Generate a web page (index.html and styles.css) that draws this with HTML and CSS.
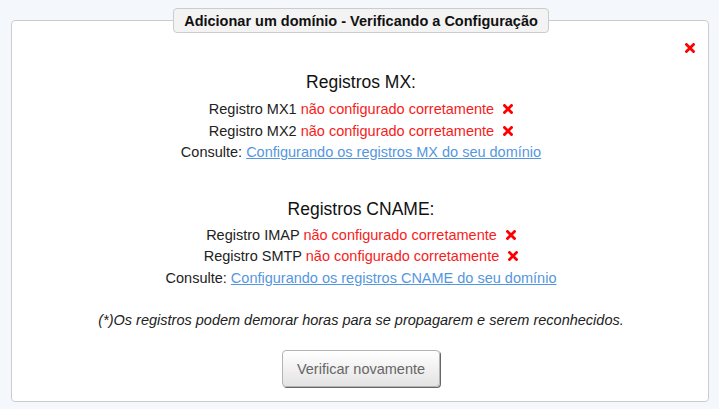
FILE: index.html
```html
<!DOCTYPE html>
<html lang="pt">
<head>
    <meta charset="UTF-8">
    <link rel="stylesheet" href="styles.css">
</head>
<body>
    <fieldset class="panel">
        <legend class="panel-title">Adicionar um domínio - Verificando a Configuração</legend>

        <div class="close-row">
            <a href="#" class="close-btn" title="Fechar">
                <svg width="10" height="10" viewBox="0 0 10 10"><path d="M1.5 1.5 L8.5 8.5 M8.5 1.5 L1.5 8.5" stroke="#f00" stroke-width="2.8" stroke-linecap="square"/></svg>
            </a>
        </div>

        <div class="section">
            <p class="section-title">Registros MX:</p>
            <p class="row">Registro MX1 <span class="error">não configurado corretamente</span> <span class="mark"><svg width="10" height="10" viewBox="0 0 10 10"><path d="M1.5 1.5 L8.5 8.5 M8.5 1.5 L1.5 8.5" stroke="#f00" stroke-width="2.8" stroke-linecap="square"/></svg></span></p>
            <p class="row">Registro MX2 <span class="error">não configurado corretamente</span> <span class="mark"><svg width="10" height="10" viewBox="0 0 10 10"><path d="M1.5 1.5 L8.5 8.5 M8.5 1.5 L1.5 8.5" stroke="#f00" stroke-width="2.8" stroke-linecap="square"/></svg></span></p>
            <p class="row">Consulte: <a href="#" class="help-link">Configurando os registros MX do seu domínio</a></p>
        </div>

        <div class="section">
            <p class="section-title">Registros CNAME:</p>
            <p class="row">Registro IMAP <span class="error">não configurado corretamente</span> <span class="mark"><svg width="10" height="10" viewBox="0 0 10 10"><path d="M1.5 1.5 L8.5 8.5 M8.5 1.5 L1.5 8.5" stroke="#f00" stroke-width="2.8" stroke-linecap="square"/></svg></span></p>
            <p class="row">Registro SMTP <span class="error">não configurado corretamente</span> <span class="mark"><svg width="10" height="10" viewBox="0 0 10 10"><path d="M1.5 1.5 L8.5 8.5 M8.5 1.5 L1.5 8.5" stroke="#f00" stroke-width="2.8" stroke-linecap="square"/></svg></span></p>
            <p class="row">Consulte: <a href="#" class="help-link">Configurando os registros CNAME do seu domínio</a></p>
        </div>

        <p class="note">(*)Os registros podem demorar horas para se propagarem e serem reconhecidos.</p>

        <div class="actions">
            <button type="button" class="btn-check">Verificar novamente</button>
        </div>
    </fieldset>
</body>
</html>
```

FILE: styles.css
```css
body {
    margin: 0;
    padding: 8px 10px 0 11px;
    background-color: #f4f8fc;
    font-family: "Liberation Sans", Arial, sans-serif;
    color: #222;
}

.panel {
    margin: 0;
    height: 394px;
    box-sizing: border-box;
    padding: 10px 13px 0 15px;
    background-color: #fff;
    border: 1px solid #ccc;
    border-radius: 4px;
}

.panel-title {
    margin: 0 auto;
    padding: 0 10px;
    height: 25px;
    line-height: 24px;
    box-sizing: border-box;
    font-size: 14.5px;
    font-weight: bold;
    color: #111;
    background-color: #f3f3f3;
    border: 1px solid #ccc;
    border-radius: 4px;
}

.close-row {
    display: flex;
    justify-content: flex-end;
    height: 10px;
}

.close-btn {
    display: block;
    width: 10px;
    height: 10px;
}

.close-btn svg {
    display: block;
}

.section {
    text-align: center;
    margin-top: 17px;
}

.section + .section {
    margin-top: 33px;
}

.section-title {
    margin: 0 0 5px;
    font-size: 17.5px;
    line-height: 24px;
    color: #111;
}

.section + .section .section-title {
    margin-bottom: 4px;
}

.row {
    margin: 0;
    font-size: 14.5px;
    line-height: 21.5px;
}

.error {
    color: #f61c1c;
}

.mark {
    display: inline-block;
    margin-left: 5px;
}

.mark svg {
    display: block;
}

.help-link {
    color: #5597de;
    text-decoration: underline;
}

.note {
    margin: 23px 0 0;
    text-align: center;
    font-size: 14.5px;
    font-style: italic;
    color: #222;
}

.actions {
    display: flex;
    justify-content: center;
    margin-top: 22px;
}

.btn-check {
    width: 158px;
    height: 37px;
    font-family: inherit;
    font-size: 14.5px;
    color: #666;
    background: linear-gradient(#ffffff, #e3e3e3);
    border: 1px solid #b3b3b3;
    border-radius: 4px;
    box-shadow: 1px 1px 0 #666;
    cursor: pointer;
}
```
